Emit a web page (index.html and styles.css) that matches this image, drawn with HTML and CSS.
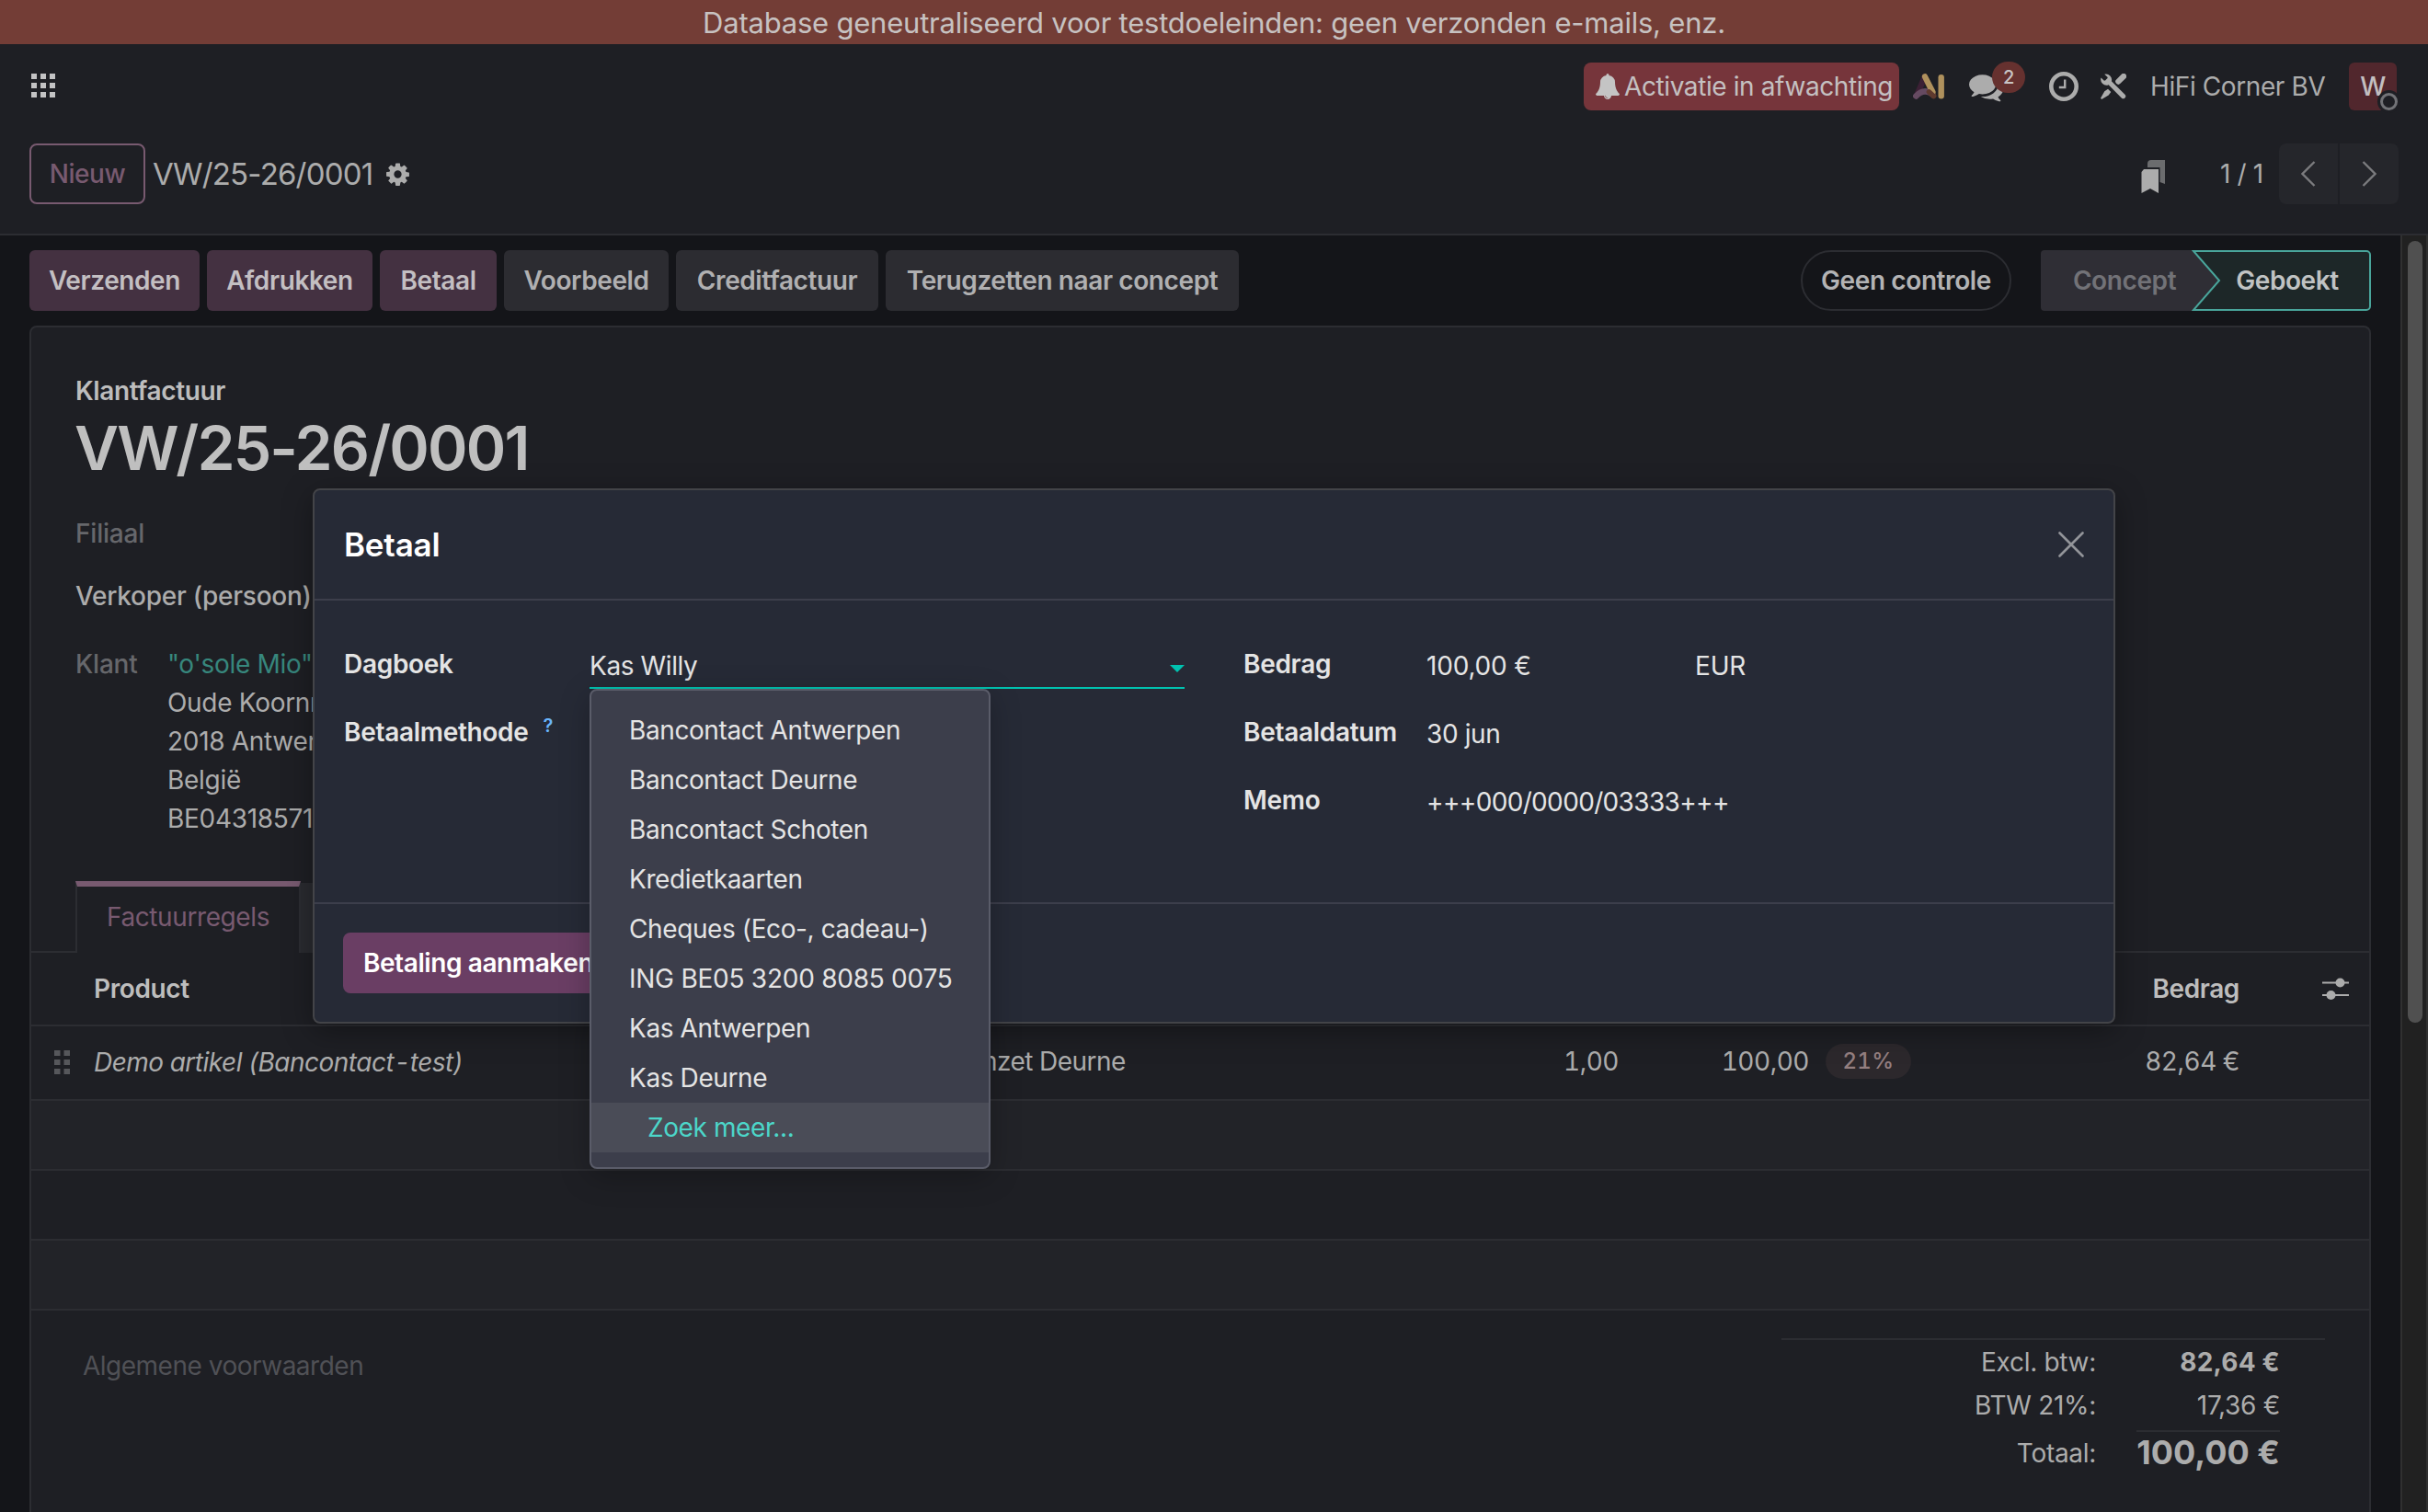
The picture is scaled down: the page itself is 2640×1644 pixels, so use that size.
FILE: index.html
```html
<!DOCTYPE html>
<html lang="nl">
<head>
  <meta charset="UTF-8" />
  <meta name="viewport" content="width=device-width, initial-scale=1.0"/>
  <title>VW/25-26/0001</title>
  <link rel="stylesheet" href="styles.css">
</head>
<body>

<div class="banner"><span>Database geneutraliseerd voor testdoeleinden: geen verzonden e-mails, enz.</span></div>

<!-- Navbar -->
<nav class="navbar">
  <svg class="apps" viewBox="0 0 26 26"><path d="M0 0h6v6H0zM10 0h6v6h-6zM20 0h6v6h-6zM0 10h6v6H0zM10 10h6v6h-6zM20 10h6v6h-6zM0 20h6v6H0zM10 20h6v6h-6zM20 20h6v6h-6z"/></svg>
  <div class="systray">
    <button class="activation">
      <svg class="bell" viewBox="0 0 1792 1792"><path d="M912 1696q0-16-16-16-59 0-101.5-42.5T752 1536q0-16-16-16t-16 16q0 73 51.5 124.5T896 1712q16 0 16-16zm816-288q0 52-38 90t-90 38h-448q0 106-75 181t-181 75-181-75-75-181H192q-52 0-90-38t-38-90q50-42 91-88t85-119.5 74.5-158.5 50-206T384 576q0-152 117-282.5T808 135q-8-19-8-39 0-40 28-68t68-28 68 28 28 68q0 20-8 39 190 28 307 158.5T1408 576q0 139 19.5 260t50 206 74.5 158.5 85 119.5 91 88z"/></svg>
      <span>Activatie in afwachting</span>
    </button>
    <svg class="ai" viewBox="0 0 34 28">
      <path d="M12.8 3.4L4 24" stroke="#3c2035" stroke-width="6.4"/>
      <path d="M13 3.4L22.4 24" stroke="#5f3a2e" stroke-width="6"/>
      <path d="M3.3 24.5Q12 15.500 21 22.500" stroke="#654a61" stroke-width="6.400"/>
      <path d="M13 3.300L21.500 20" stroke="#af915d" stroke-width="6.200"/>
      <path d="M22.400 24.500L17.500 20" stroke="#5f3a2e" stroke-width="5.600"/>
      <path d="M30.700 4.200V24.300" stroke="#af915d" stroke-width="6.400"/>
    </svg>
    <div class="messages">
      <svg class="comments" viewBox="0 0 1792 1792"><path d="M1408 768q0 139-94 257t-256.500 186.500T704 1280q-86 0-176-16-124 88-278 128-36 9-86 16h-3q-11 0-20.500-8t-11.500-21q-1-3-1-6.500t.5-6.500 2-6l2.500-5 3.500-5.500 4-5 4.500-5 4-4.500q5-6 23-25t26-29.500 22.500-29 25-38.500 20.500-44q-124-72-195-177T0 768q0-139 94-257t256.500-186.500T704 256t353.500 68.500T1314 511t94 257zm384 256q0 120-71 224.500t-195 176.500q10 24 20.500 44t25 38.500 22.500 29 26 29.500 23 25q1 1 4 4.500t4.500 5 4 5 3.500 5.500l2.500 5 2 6 .5 6.500-1 6.500q-3 14-13 22t-22 7q-50-7-86-16-154-40-278-128-90 16-176 16-271 0-472-132 58 4 88 4 161 0 309-45t264-129q125-92 192-212t67-254q0-77-23-152 129 71 204 178t75 230z"/></svg>
      <span class="badge">2</span>
    </div>
    <svg class="clock" viewBox="0 0 32 32"><circle cx="16" cy="16" r="13.700"/><path d="M17.200 8.500V17H10.800"/></svg>
    <svg class="tools" viewBox="0 0 28 28">
      <path d="M8 8L24.600 24.600" stroke-width="5.200"/>
      <path d="M19.300 8.600L25 3" stroke-width="6.200"/>
      <path class="solid" d="M4.200.8a6.300 6.300 0 0 1 7.600 8l-3.600 3.600A6.300 6.300 0 0 1 .5 4.400l3.400 3.300 3.200-.7.600-3zM8 16.800l3.300 3.300-2.600 3.500L1.200 28 0 26.800l4.300-7.500z"/>
    </svg>
    <span class="company">HiFi Corner BV</span>
    <div class="avatar">W<i class="presence"></i></div>
  </div>
</nav>

<!-- Control panel -->
<header class="control-panel">
  <button class="btn-new">Nieuw</button>
  <span class="breadcrumb">VW/25-26/0001</span>
  <svg class="gear" viewBox="0 0 1792 1792"><path d="M1152 896q0-106-75-181t-181-75-181 75-75 181 75 181 181 75 181-75 75-181zm512-109v222q0 12-8 23t-20 13l-185 28q-19 54-39 91 35 50 107 138 10 12 10 25t-9 23q-27 37-99 108t-94 71q-12 0-26-9l-138-108q-44 23-91 38-16 136-29 186-7 28-36 28H785q-14 0-24.500-8.500T749 1634l-28-184q-49-16-90-37l-141 107q-10 9-25 9-14 0-25-11-126-114-165-168-7-10-7-23 0-12 8-23 15-21 51-66.500t54-70.500q-27-50-41-99l-183-27q-13-2-21-12.500t-8-23.500V785q0-12 8-23t19-13l186-28q14-46 39-92-40-57-107-138-10-12-10-24 0-10 9-23 26-36 98.500-107.500T465 288q13 0 26 10l138 107q44-23 91-38 16-136 29-186 7-28 36-28h222q14 0 24.500 8.500T1043 182l28 184q49 16 90 37l142-107q9-9 24-9 13 0 25 10 129 119 165 170 7 8 7 22 0 12-8 23-15 21-51 66.500t-54 70.500q26 50 41 98l183 28q13 2 21 12.500t8 23.500z"/></svg>
  <div class="pager">
    <svg class="bookmark" viewBox="0 0 26 36">
      <path fill="#6b6c6e" d="M7 8V4a4 4 0 0 1 4-4h15v26l-5.500-2V8z"/>
      <path fill="#acacac" d="M3 10h16v26l-9-5-9.500 5V13z"/>
    </svg>
    <span class="count">1 / 1</span>
    <button class="prev"><svg viewBox="0 0 16 28"><path d="M14.500 1L1.500 14l13 13"/></svg></button>
    <button class="next"><svg viewBox="0 0 16 28"><path d="M1.500 1l13 13-13 13"/></svg></button>
  </div>
</header>

<main class="content">
  <div class="form-view">
    <div class="statusbar">
      <button class="btn primary w-send">Verzenden</button>
      <button class="btn primary w-print">Afdrukken</button>
      <button class="btn primary w-pay">Betaal</button>
      <button class="btn w-preview">Voorbeeld</button>
      <button class="btn w-credit">Creditfactuur</button>
      <button class="btn w-reset">Terugzetten naar concept</button>
      <button class="no-check">Geen controle</button>
      <div class="status">
        <svg class="status-bg" viewBox="0 0 359 66">
          <path d="M4 0H166L195 33 166 66H4a4 4 0 0 1-4-4V4a4 4 0 0 1 4-4z" fill="#2f2e35"/>
          <path d="M166 1H354a4 4 0 0 1 4 4V61a4 4 0 0 1-4 4H166L194 33z" fill="#1d2728" stroke="#49a59b" stroke-width="2"/>
        </svg>
        <span class="draft">Concept</span>
        <span class="posted">Geboekt</span>
      </div>
    </div>

    <div class="sheet">
      <div class="sheet-top">
        <div class="move-type">Klantfactuur</div>
        <h1>VW/25-26/0001</h1>
        <div class="branch">Filiaal</div>
        <div class="salesman">Verkoper (persoon)</div>
        <div class="partner">
          <span class="partner-label">Klant</span>
          <div class="address">
            <a>"o'sole Mio"</a><br>
            Oude Koornmarkt<br>
            2018 Antwerpen<br>
            België<br>
            BE0431857173
          </div>
        </div>
      </div>

      <div class="tabs">
        <div class="tab active">Factuurregels</div>
        <div class="tab other"></div>
        <div class="tab-fill"></div>
      </div>

      <div class="lines">
        <div class="row head">
          <span></span><span>Product</span><span></span><span></span><span></span><span></span>
          <span class="num">Bedrag</span>
          <svg class="sliders" viewBox="0 0 29 24"><path d="M0 5.500H29M0 19H29"/><circle cx="19.500" cy="5.500" r="5"/><circle cx="9.500" cy="19" r="5"/></svg>
        </div>
        <div class="row line">
          <svg class="handle" viewBox="0 0 17 26"><path d="M0 0h6.500v6H0zM10.500 0H17v6h-6.500zM0 10h6.500v6H0zM10.500 10H17v6h-6.500zM0 20h6.500v6H0zM10.500 20H17v6h-6.500z"/></svg>
          <em>Demo artikel (Bancontact-test)</em>
          <span class="account">Omzet Deurne</span>
          <span class="num">1,00</span>
          <span class="num">100,00</span>
          <span class="tax">21%</span>
          <span class="num">82,64 €</span>
        </div>
        <div class="row empty odd"></div>
        <div class="row empty"></div>
        <div class="row empty odd"></div>
      </div>

      <div class="sheet-bottom">
        <div class="terms">Algemene voorwaarden</div>
        <div class="totals">
          <span>Excl. btw:</span><b>82,64 €</b>
          <span>BTW 21%:</span><span>17,36 €</span>
          <span class="total-label">Totaal:</span><b class="total">100,00 €</b>
        </div>
      </div>
    </div>
  </div>
  <div class="scrollbar"><div class="thumb"></div></div>
</main>

<!-- Payment dialog -->
<div class="modal">
  <div class="modal-header">
    <h2>Betaal</h2>
    <svg class="close" viewBox="0 0 28 28"><path d="M1.500 1.500l25 25M26.500 1.500l-25 25"/></svg>
  </div>
  <div class="modal-body">
    <div class="group left">
      <label>Dagboek</label>
      <div class="journal">
        <span>Kas Willy</span>
        <i class="caret"></i>
        <ul class="dropdown">
          <li>Bancontact Antwerpen</li>
          <li>Bancontact Deurne</li>
          <li>Bancontact Schoten</li>
          <li>Kredietkaarten</li>
          <li>Cheques (Eco-, cadeau-)</li>
          <li class="iban">ING BE05 3200 8085 0075</li>
          <li>Kas Antwerpen</li>
          <li>Kas Deurne</li>
          <li class="more">Zoek meer...</li>
        </ul>
      </div>
      <label>Betaalmethode<sup>?</sup></label>
      <span></span>
    </div>
    <div class="group right">
      <label>Bedrag</label>
      <div class="amount"><span>100,00 €</span><span>EUR</span></div>
      <label>Betaaldatum</label>
      <span class="value">30 jun</span>
      <label>Memo</label>
      <span class="value memo">+++000/0000/03333+++</span>
    </div>
  </div>
  <div class="modal-footer">
    <button class="btn-create">Betaling aanmaken</button>
  </div>
</div>

</body>
</html>
```
FILE: styles.css
```css
* {
  box-sizing: border-box;
}

body {
  margin: 0;
  height: 1644px;
  position: relative;
  overflow: hidden;
  display: flex;
  flex-direction: column;
  background-color: #1e1f24;
  color: #acacac;
  font-family: Inter, sans-serif;
  font-size: 28px;
  line-height: 42px;
  letter-spacing: -0.4px;
}

button {
  font: inherit;
  letter-spacing: inherit;
  color: inherit;
  border: none;
  padding: 0;
  white-space: nowrap;
}

svg {
  display: block;
  flex: none;
}

.banner {
  flex: none;
  height: 48px;
  background-color: #733d36;
  color: #c7c2c1;
  font-size: 31px;
  line-height: 50px;
  letter-spacing: -0.22px;
  text-align: center;
}

/* navbar */
.navbar {
  flex: none;
  height: 92px;
  padding: 0 34px;
  display: flex;
  align-items: center;
  justify-content: space-between;
}

.apps {
  width: 26px;
  height: 26px;
  margin-bottom: 2px;
  fill: #c3c3c4;
}

.systray {
  display: flex;
  align-items: center;
}

.activation {
  display: flex;
  align-items: center;
  width: 343px;
  height: 52px;
  padding-left: 12px;
  border-radius: 8px;
  background-color: #76353b;
  color: #c4c0c1;
}

.bell {
  width: 28px;
  height: 28px;
  margin-right: 4px;
  fill: #c4c4c4;
}

.ai {
  width: 34px;
  height: 28px;
  margin-left: 15px;
  fill: none;
  stroke-linecap: round;
}

.messages {
  position: relative;
  margin-left: 27px;
  width: 61px;
}

.comments {
  width: 37px;
  height: 37px;
  fill: #acacac;
}

.badge {
  position: absolute;
  left: 25px;
  top: -9px;
  width: 36px;
  height: 34px;
  border-radius: 17px;
  background-color: #66312f;
  color: #c8c4c4;
  font-size: 20px;
  font-weight: 500;
  line-height: 34px;
  text-align: center;
}

.clock {
  width: 32px;
  height: 32px;
  margin-left: 26px;
  fill: none;
  stroke: #acacac;
  stroke-width: 4.6;
}

.clock path {
  stroke-width: 2.4;
}

.tools {
  width: 28px;
  height: 28px;
  margin-left: 24px;
  fill: none;
  stroke: #acacac;
  stroke-linecap: round;
}

.tools .solid {
  fill: #acacac;
  stroke: none;
}

.company {
  width: 216px;
  margin-left: 26px;
  white-space: nowrap;
}

.avatar {
  position: relative;
  width: 52px;
  height: 52px;
  border-radius: 6px;
  background-color: #51272d;
  color: #c3bfc0;
  font-weight: 500;
  line-height: 52px;
  text-align: center;
}

.presence {
  position: absolute;
  right: -1px;
  bottom: 0;
  width: 19px;
  height: 19px;
  border: 3px solid #727377;
  border-radius: 50%;
  background-color: #1e1f24;
  box-shadow: 0 0 0 3px #1e1f24;
}

/* control panel */
.control-panel {
  flex: none;
  height: 116px;
  padding: 16px 32px 32px;
  display: flex;
  align-items: center;
  border-bottom: 2px solid #2c2d32;
}

.btn-new {
  width: 126px;
  height: 66px;
  border: 2px solid #785a70;
  border-radius: 8px;
  background: none;
  color: #785a70;
  font-weight: 540;
}

.breadcrumb {
  width: 253px;
  margin-left: 8px;
  font-size: 33px;
  letter-spacing: -0.8px;
  white-space: nowrap;
}

.gear {
  width: 29px;
  height: 29px;
  margin-left: -1px;
  fill: #acacac;
}

.pager {
  margin-left: auto;
  display: flex;
  align-items: center;
}

.bookmark {
  width: 26px;
  height: 36px;
  margin-top: 6px;
}

.count {
  width: 64px;
  margin-left: 60px;
  white-space: nowrap;
}

.prev,
.next {
  width: 64px;
  height: 66px;
  display: flex;
  align-items: center;
  justify-content: center;
  background-color: #25262b;
}

.prev {
  border-radius: 8px 0 0 8px;
}

.next {
  margin-left: 2px;
  border-radius: 0 8px 8px 0;
}

.prev svg,
.next svg {
  width: 16px;
  height: 28px;
  fill: none;
  stroke: #7b7b7e;
  stroke-width: 2.4;
}

/* form */
.content {
  flex: 1;
  min-height: 0;
  display: flex;
  background-color: #141519;
}

.form-view {
  width: 2610px;
  padding: 16px 32px 0;
  overflow: hidden;
}

.statusbar {
  display: flex;
  gap: 8px;
  height: 66px;
}

.btn {
  border-radius: 6px;
  background-color: #2c2c31;
  color: #b0b0b1;
  font-weight: 560;
}

.btn.primary {
  background-color: #443141;
  color: #c3bfc2;
}

.w-send { width: 185px; }
.w-print { width: 180px; }
.w-pay { width: 127px; }
.w-preview { width: 179px; }
.w-credit { width: 220px; }
.w-reset { width: 384px; }

.no-check {
  width: 229px;
  margin-left: auto;
  border: 2px solid #2c2d32;
  border-radius: 33px;
  background: none;
  color: #b3b3b4;
  font-weight: 560;
}

.status {
  position: relative;
  width: 359px;
  margin-left: 24px;
  display: flex;
  font-weight: 560;
  line-height: 66px;
}

.status-bg {
  position: absolute;
  inset: 0;
}

.draft,
.posted {
  position: relative;
  width: 182px;
  text-align: center;
  color: #727277;
}

.posted {
  width: 172px;
  color: #c0c3c3;
}

.sheet {
  width: 2546px;
  height: 1400px;
  margin-top: 16px;
  border: 2px solid #2c2d32;
  border-radius: 8px;
  background-color: #1e1f24;
}

.sheet-top {
  height: 602px;
  padding: 48px 48px 0;
}

.move-type {
  font-weight: 560;
  letter-spacing: -0.35px;
  color: #bdbdbd;
}

h1 {
  margin: 2px 0 33px -1px;
  font-size: 66px;
  font-weight: 570;
  line-height: 78px;
  letter-spacing: -1.85px;
  color: #bfbfbf;
}

.branch,
.partner-label {
  color: #66676b;
  font-weight: 530;
  letter-spacing: -0.2px;
}

.salesman {
  margin: 26px 0 32px;
  font-weight: 540;
  letter-spacing: -0.25px;
}

.partner {
  display: flex;
}

.partner-label {
  width: 100px;
}

.address {
  letter-spacing: -0.3px;
}

.address a {
  color: #37877d;
}

.tabs {
  display: flex;
  height: 78px;
}

.tabs::before {
  content: "";
  width: 48px;
  border-bottom: 2px solid #2c2d32;
}

.tab.active {
  width: 245px;
  border: 2px solid #2c2d32;
  border-top: 6px solid #785a70;
  border-bottom: none;
  color: #785a70;
  line-height: 66px;
  text-align: center;
}

.tab.other {
  width: 240px;
  margin-top: 2px;
  background-color: #2a2b30;
}

.tab-fill {
  flex: 1;
  border-bottom: 2px solid #2c2d32;
}

.row {
  display: grid;
  grid-template-columns: 68px 937px 541px 180px 207px 111px 357px 90px;
  align-items: center;
  height: 76px;
  border-bottom: 2px solid #2c2d32;
}

.row.head {
  height: 80px;
  color: #bdbdbd;
  font-weight: 560;
}

.row.line {
  height: 81px;
  padding-bottom: 3px;
  font-variant-numeric: tabular-nums;
  letter-spacing: -0.5px;
}

.row.odd {
  background-color: #222328;
}

.row em {
  padding-top: 2px;
}

.num {
  text-align: right;
}

.handle {
  width: 17px;
  height: 26px;
  margin: 2px 0 0 25px;
  fill: #56575b;
}

.tax {
  justify-self: end;
  width: 93px;
  height: 38px;
  border-radius: 19px;
  background-color: #2c282c;
  color: #947f80;
  font-size: 24px;
  font-weight: 500;
  line-height: 38px;
  letter-spacing: 0.4px;
  text-align: center;
}

.sliders {
  width: 29px;
  height: 24px;
  margin-left: 90px;
  stroke: #acacac;
  stroke-width: 2;
  fill: #acacac;
}

.sliders circle {
  stroke: none;
}

.sheet-bottom {
  display: flex;
  justify-content: space-between;
  padding: 30px 48px 0 56px;
}

.terms {
  margin-top: 9px;
  letter-spacing: -0.55px;
  color: #505156;
  letter-spacing: -0.5px;
}

.totals {
  width: 591px;
  padding-right: 49px;
  border-top: 2px solid #2c2d32;
  display: grid;
  grid-template-columns: 1fr 156px;
  grid-template-rows: 47px 46px 50px;
  column-gap: 44px;
  line-height: 48px;
  letter-spacing: -0.3px;
  text-align: right;
  white-space: nowrap;
}

.totals b {
  font-weight: 700;
  letter-spacing: 0.2px;
}

.total-label {
  padding-top: 6px;
}

.totals .total {
  margin-top: 5px;
  border-top: 2px solid #2c2d32;
  font-size: 36px;
  line-height: 44px;
  letter-spacing: 0;
}

.scrollbar {
  width: 30px;
  padding: 6px 4px 0 6px;
  border-left: 2px solid #303030;
  border-right: 2px solid #303030;
  background-color: #212121;
}

.thumb {
  width: 16px;
  height: 850px;
  border-radius: 8px;
  background-color: #505050;
}

/* dialog */
.modal {
  position: absolute;
  left: 340px;
  top: 531px;
  width: 1960px;
  height: 582px;
  display: flex;
  flex-direction: column;
  border: 2px solid #434448;
  border-radius: 8px;
  background-color: #262a36;
  box-shadow: 0 8px 32px rgba(0, 0, 0, 0.35);
  color: #e4e4e4;
}

.modal-header {
  height: 120px;
  padding: 0 32px;
  display: flex;
  align-items: center;
  justify-content: space-between;
  border-bottom: 2px solid #3c3e4b;
}

h2 {
  margin: 0;
  font-size: 35px;
  font-weight: 560;
  letter-spacing: -0.2px;
  color: #fff;
}

.close {
  width: 28px;
  height: 28px;
  fill: none;
  stroke: #929499;
  stroke-width: 2.6;
  stroke-linecap: round;
}

.modal-body {
  height: 330px;
  padding: 48px 32px 0;
  display: flex;
  border-bottom: 2px solid #3c3e4b;
}

.group {
  display: grid;
  align-content: start;
  grid-auto-rows: 74px;
}

.group label {
  font-weight: 560;
  letter-spacing: -0.3px;
}

.left {
  width: 978px;
  grid-template-columns: 267px 647px;
}

.right {
  grid-template-columns: 199px 600px;
}

.journal {
  position: relative;
  height: 48px;
  padding: 2px 0 0;
  border-bottom: 2px solid #00c2b0;
}

.caret {
  position: absolute;
  right: 0;
  top: 22px;
  border: 8px solid transparent;
  border-top-color: #00c2b0;
  border-bottom: none;
}

.dropdown {
  position: absolute;
  left: 0;
  top: 48px;
  width: 436px;
  height: 522px;
  margin: 0;
  padding: 16px 0;
  list-style: none;
  border: 2px solid #5a5c69;
  border-radius: 8px;
  background-color: #3c3e4b;
  box-shadow: 0 8px 32px rgba(0, 0, 0, 0.25);
}

.dropdown li {
  height: 54px;
  padding-left: 41px;
  line-height: 54px;
  white-space: nowrap;
}

.dropdown .iban {
  letter-spacing: -0.25px;
}

.dropdown .more {
  padding-left: 61px;
  background-color: #4a4c57;
  color: #4cd6c9;
}

.group sup {
  margin-left: 16px;
  font-size: 20px;
  line-height: 0;
  vertical-align: 10px;
  color: #6ab5fb;
}

.value {
  padding-top: 2px;
}

.memo {
  letter-spacing: -0.65px;
}

.amount {
  display: flex;
  padding-top: 2px;
  letter-spacing: -0.2px;
}

.amount span:first-child {
  width: 292px;
}

.modal-footer {
  padding: 31px;
}

.btn-create {
  width: 294px;
  height: 66px;
  border-radius: 8px;
  background-color: #6a3e64;
  color: #fff;
  font-weight: 560;
}
```
